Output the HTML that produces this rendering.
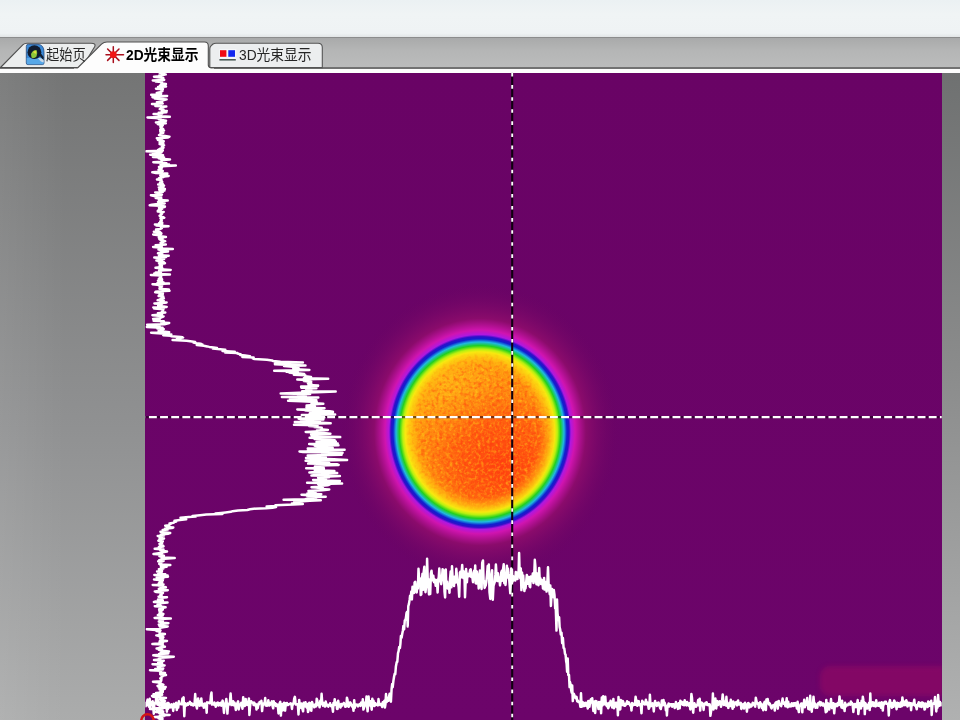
<!DOCTYPE html>
<html lang="zh">
<head>
<meta charset="utf-8">
<title>2D光束显示</title>
<style>
html,body{margin:0;padding:0;}
body{width:960px;height:720px;overflow:hidden;position:relative;background:#8c8c8c;font-family:"Liberation Sans","Noto Sans CJK SC",sans-serif;}
#top{position:absolute;left:0;top:0;width:960px;height:37.2px;background:linear-gradient(#ebf1f3,#f0f4f5 40%,#eff3f4 90%,#e2e5e6);}
#bar{position:absolute;left:0;top:37.2px;width:960px;height:30px;background:linear-gradient(#a9aaaa,#b4b5b5 40%,#bbbcbc);border-top:1.4px solid #8c8d8d;box-sizing:border-box;}
#barline{position:absolute;left:0;top:66.8px;width:960px;height:1.8px;background:#727272;}
#white{position:absolute;left:0;top:68.5px;width:960px;height:4.3px;background:#fdfdfd;}
#leftpane{position:absolute;left:0;top:72.8px;width:146px;height:648px;background:linear-gradient(90deg,rgba(255,255,255,.07),rgba(255,255,255,0) 45%),linear-gradient(#747575,#909192 55%,#abacac);}
#rightpane{position:absolute;left:941px;top:72.8px;width:19px;height:648px;background:linear-gradient(#6f7171,#8a8b8b 45%,#b0b1b1);}
#view{position:absolute;left:145.4px;top:72.8px;width:796.3px;height:648px;background:linear-gradient(#690365,#6c046a);}
svg{position:absolute;left:0;top:0;}
.tab{position:absolute;font-size:15px;line-height:20px;white-space:nowrap;color:#262626;transform:scaleX(.917);transform-origin:0 0;}
</style>
</head>
<body>
<div id="top"></div>
<div id="bar"></div>
<div id="barline"></div>
<div id="white"></div>
<div id="leftpane"></div>
<div id="rightpane"></div>
<div id="view"></div>
<svg width="960" height="720" viewBox="0 0 960 720">
<defs>
<radialGradient id="beam" cx="0.5" cy="0.5" r="0.5">
<stop offset="0" stop-color="#ff8a14"/>
<stop offset="0.36" stop-color="#ff8c12"/>
<stop offset="0.44" stop-color="#ff9a10"/>
<stop offset="0.49" stop-color="#ffc010"/>
<stop offset="0.534" stop-color="#f8ea10"/>
<stop offset="0.553" stop-color="#b8f010"/>
<stop offset="0.576" stop-color="#20d020"/>
<stop offset="0.600" stop-color="#20b8e0"/>
<stop offset="0.621" stop-color="#1020d0"/>
<stop offset="0.636" stop-color="#3010c8"/>
<stop offset="0.650" stop-color="#b018e0"/>
<stop offset="0.679" stop-color="#d014b0"/>
<stop offset="0.757" stop-color="#8e0c6c" stop-opacity="0.9"/>
<stop offset="1" stop-color="#670462" stop-opacity="0"/>
</radialGradient>
<radialGradient id="warm" cx="0.5" cy="0.5" r="0.5">
<stop offset="0" stop-color="#ffc018" stop-opacity="0.75"/>
<stop offset="0.6" stop-color="#ffb014" stop-opacity="0.4"/>
<stop offset="1" stop-color="#ffa010" stop-opacity="0"/>
</radialGradient>
<radialGradient id="hot" cx="0.5" cy="0.5" r="0.5">
<stop offset="0" stop-color="#ff3c10" stop-opacity="0.95"/>
<stop offset="0.5" stop-color="#ff4a10" stop-opacity="0.7"/>
<stop offset="1" stop-color="#ff6a10" stop-opacity="0"/>
</radialGradient>
<clipPath id="vc"><rect x="145.4" y="72.8" width="796.3" height="648"/></clipPath>
<radialGradient id="mg" cx="0.5" cy="0.5" r="0.5">
<stop offset="0" stop-color="#fff"/><stop offset="0.78" stop-color="#fff"/><stop offset="1" stop-color="#000"/>
</radialGradient>
<mask id="core" maskUnits="userSpaceOnUse" x="380" y="320" width="200" height="220"><ellipse cx="480" cy="432" rx="76" ry="81" fill="url(#mg)"/></mask>
<filter id="grainY" x="0" y="0" width="100%" height="100%" color-interpolation-filters="sRGB">
<feTurbulence type="fractalNoise" baseFrequency="0.32" numOctaves="2" seed="4"/>
<feColorMatrix type="matrix" values="0 0 0 0 1  0 0 0 0 0.82  0 0 0 0 0.1  2.6 0 0 0 -1.15"/>
</filter>
<filter id="grainR" x="0" y="0" width="100%" height="100%" color-interpolation-filters="sRGB">
<feTurbulence type="fractalNoise" baseFrequency="0.28" numOctaves="2" seed="9"/>
<feColorMatrix type="matrix" values="0 0 0 0 1  0 0 0 0 0.2  0 0 0 0 0.05  0 2.6 0 0 -1.15"/>
</filter>
<filter id="sm" x="-10%" y="-30%" width="120%" height="160%"><feGaussianBlur stdDeviation="2.5"/></filter>
</defs>
<g clip-path="url(#vc)">
<rect x="820" y="666" width="130" height="30" rx="10" fill="#a80e60" opacity="0.4" filter="url(#sm)"/>
<ellipse cx="480" cy="432" rx="140" ry="150" fill="url(#beam)"/>
<g mask="url(#core)"><ellipse cx="445" cy="380" rx="70" ry="70" fill="url(#warm)"/><ellipse cx="502" cy="464" rx="88" ry="84" fill="url(#hot)"/>
<rect x="390" y="340" width="180" height="190" filter="url(#grainY)" opacity="0.55"/>
<rect x="390" y="340" width="180" height="190" filter="url(#grainR)" opacity="0.5"/></g>
<!-- crosshair -->
<line x1="145.4" y1="417.2" x2="942" y2="417.2" stroke="#100010" stroke-width="2.2" opacity="0.55"/>
<line x1="145.4" y1="417.2" x2="942" y2="417.2" stroke="#fff" stroke-width="2.3" stroke-dasharray="7.9 3.24" stroke-dashoffset="7.61"/>
<line x1="512.2" y1="72.8" x2="512.2" y2="720" stroke="#100010" stroke-width="2.1"/>
<line x1="512.2" y1="73" x2="512.2" y2="720" stroke="#fff" stroke-width="1.9" stroke-dasharray="3.6 8.49"/>
<path d="M158.7 72.5 L161.7 73.1 L161.9 73.7 L165.7 74.4 L163.1 75.0 L159.3 75.6 L159.4 76.3 L154.0 76.7 L159.8 77.4 L163.3 77.9 L163.4 78.4 L162.4 79.0 L160.9 79.5 L164.2 79.9 L152.8 80.4 L162.0 80.9 L155.8 81.6 L162.0 82.1 L160.9 82.7 L161.8 83.5 L165.9 84.0 L161.9 84.6 L160.9 85.1 L160.0 85.6 L160.4 86.1 L166.0 86.6 L158.1 87.1 L163.3 87.6 L160.8 88.1 L156.0 88.7 L162.8 89.3 L161.2 89.8 L162.2 90.5 L162.4 91.0 L160.8 91.7 L159.9 92.3 L156.8 92.9 L161.1 93.6 L160.8 94.3 L151.2 94.8 L152.4 95.4 L167.1 95.9 L162.5 96.4 L152.5 97.2 L159.4 97.9 L154.6 98.4 L160.8 99.0 L166.6 99.4 L163.1 100.2 L162.1 100.9 L162.1 101.6 L156.9 102.2 L158.1 102.9 L162.7 103.6 L152.0 104.1 L159.7 104.8 L160.8 105.4 L155.4 106.1 L166.3 106.6 L161.7 107.0 L161.3 107.7 L162.1 108.3 L159.7 109.1 L163.5 109.6 L162.4 110.4 L166.8 110.9 L161.7 111.6 L166.4 112.3 L158.7 112.8 L162.4 113.4 L153.6 114.1 L161.2 114.7 L158.5 115.3 L159.9 115.8 L161.6 116.3 L169.8 116.8 L147.5 117.5 L155.6 118.1 L160.3 118.6 L158.8 119.3 L161.7 120.0 L166.0 120.7 L163.4 121.4 L161.1 122.0 L155.9 122.5 L165.8 123.3 L157.7 124.0 L160.2 124.7 L162.8 125.3 L162.0 126.0 L161.3 126.4 L160.4 126.9 L161.7 127.6 L161.8 128.3 L163.1 128.9 L160.3 129.4 L160.2 130.0 L164.0 130.6 L160.3 131.2 L162.7 132.0 L163.3 132.7 L160.5 133.2 L160.6 133.8 L160.7 134.4 L159.0 135.1 L160.2 135.5 L165.1 136.1 L169.5 136.7 L168.1 137.4 L156.8 138.2 L162.5 138.7 L161.1 139.2 L157.8 139.8 L159.2 140.5 L163.7 141.2 L161.4 141.8 L159.7 142.5 L160.7 143.1 L163.3 143.6 L159.6 144.1 L162.1 144.8 L164.1 145.3 L162.6 145.8 L162.0 146.5 L161.8 147.2 L163.5 147.7 L161.8 148.2 L159.4 148.9 L162.7 149.6 L158.0 150.1 L162.8 150.7 L146.1 151.2 L161.6 151.9 L161.4 152.5 L158.8 153.1 L152.8 153.7 L158.0 154.2 L150.1 154.7 L163.1 155.2 L157.7 155.9 L159.5 156.4 L152.9 157.0 L164.1 157.5 L158.6 158.2 L160.9 158.8 L170.0 159.4 L162.4 160.1 L161.5 160.6 L161.3 161.2 L161.7 161.8 L153.3 162.3 L162.5 162.8 L166.4 163.3 L162.7 163.8 L169.0 164.4 L160.5 164.9 L175.8 165.6 L162.2 166.3 L159.0 166.9 L162.0 167.5 L159.5 168.1 L161.2 168.7 L161.4 169.2 L158.5 169.8 L160.2 170.2 L162.8 170.9 L161.5 171.6 L152.3 172.3 L155.8 172.9 L167.3 173.6 L165.7 174.1 L161.7 174.6 L160.3 175.3 L168.7 176.0 L164.0 176.5 L163.6 177.1 L160.0 177.7 L158.8 178.3 L161.0 178.8 L157.0 179.5 L161.5 180.1 L161.1 180.6 L161.7 181.3 L162.2 181.9 L160.0 182.5 L161.0 183.1 L162.7 183.8 L158.2 184.5 L163.1 185.0 L164.0 185.6 L162.1 186.2 L163.5 186.8 L158.8 187.4 L162.0 188.0 L159.5 188.5 L164.9 189.1 L159.2 189.8 L164.5 190.5 L160.1 191.2 L162.8 191.9 L155.2 192.5 L159.9 193.0 L160.2 193.6 L160.9 194.1 L161.9 194.7 L150.9 195.3 L154.3 196.0 L159.9 196.6 L161.2 197.2 L155.6 197.9 L160.8 198.4 L161.4 198.9 L160.5 199.5 L158.9 200.0 L167.7 200.6 L159.4 201.2 L158.0 202.0 L162.9 202.7 L164.7 203.4 L157.9 204.0 L152.0 204.7 L149.7 205.2 L160.4 205.8 L164.9 206.5 L164.7 207.0 L159.0 207.4 L160.5 208.1 L162.2 208.8 L159.0 209.4 L160.9 209.9 L157.8 210.7 L157.8 211.4 L163.7 211.9 L160.2 212.4 L161.2 213.0 L162.0 213.7 L161.2 214.4 L160.4 215.1 L159.6 215.8 L161.4 216.6 L163.5 217.2 L164.3 217.7 L160.4 218.4 L160.9 218.9 L161.6 219.6 L161.8 220.2 L160.7 220.9 L160.3 221.6 L161.5 222.0 L162.2 222.7 L159.1 223.2 L162.2 223.9 L154.9 224.5 L156.5 224.9 L156.2 225.5 L168.6 226.2 L160.7 226.7 L161.9 227.5 L161.9 228.1 L160.4 228.9 L156.0 229.6 L158.6 230.3 L158.2 231.0 L153.9 231.7 L160.2 232.2 L160.1 232.6 L161.4 233.3 L161.3 233.9 L153.2 234.4 L157.1 235.1 L160.7 235.7 L161.2 236.3 L165.9 237.0 L158.8 237.6 L161.5 238.2 L162.6 238.7 L159.4 239.2 L160.6 239.8 L162.4 240.4 L165.2 241.1 L163.7 241.7 L161.5 242.2 L160.6 242.8 L161.7 243.3 L160.8 243.9 L165.8 244.5 L155.6 245.2 L160.0 245.9 L161.6 246.5 L153.1 247.0 L162.0 247.7 L161.0 248.4 L172.8 249.1 L158.5 249.6 L162.1 250.2 L163.0 250.8 L168.0 251.5 L161.7 252.0 L159.8 252.7 L158.0 253.3 L162.2 254.0 L159.5 254.6 L159.0 255.2 L168.7 255.8 L161.0 256.4 L166.2 256.9 L154.3 257.6 L160.6 258.2 L164.1 258.9 L161.0 259.5 L162.4 260.1 L156.4 260.6 L161.1 261.2 L161.0 261.7 L163.8 262.2 L158.9 262.8 L165.0 263.2 L161.8 263.8 L159.7 264.6 L161.2 265.3 L161.9 265.8 L159.5 266.3 L161.8 267.1 L155.5 267.8 L162.5 268.5 L160.6 269.2 L170.7 269.9 L159.1 270.6 L159.4 271.2 L161.0 271.9 L155.8 272.4 L160.5 272.9 L154.3 273.4 L159.2 273.9 L169.9 274.4 L150.9 274.9 L161.5 275.6 L161.0 276.3 L159.8 277.0 L161.0 277.7 L161.5 278.3 L158.8 279.0 L162.1 279.6 L160.6 280.1 L158.0 280.7 L162.2 281.4 L161.4 282.0 L163.5 282.4 L157.5 283.1 L169.0 283.6 L152.5 284.2 L157.3 284.8 L161.1 285.5 L162.1 285.9 L159.5 286.6 L160.8 287.1 L161.0 287.6 L162.1 288.3 L159.5 288.7 L168.8 289.5 L163.1 290.1 L169.5 290.8 L159.7 291.3 L155.5 291.8 L155.2 292.3 L159.4 292.8 L162.9 293.5 L161.5 293.9 L162.7 294.6 L159.1 295.2 L158.6 295.9 L163.3 296.5 L161.7 297.1 L162.1 297.7 L163.9 298.2 L160.9 298.8 L160.4 299.2 L159.3 299.7 L157.6 300.2 L163.7 300.7 L162.7 301.2 L160.3 301.9 L166.6 302.4 L162.7 303.0 L154.4 303.5 L161.9 304.0 L158.1 304.6 L161.4 305.2 L158.2 305.8 L163.7 306.4 L166.7 306.9 L153.3 307.4 L164.2 308.0 L154.2 308.6 L163.4 309.2 L163.3 309.9 L162.6 310.6 L162.5 311.3 L161.8 311.9 L165.3 312.6 L157.9 313.3 L160.6 314.0 L162.0 314.5 L152.4 315.2 L158.4 315.8 L163.6 316.4 L162.6 316.9 L161.4 317.4 L159.8 318.2 L153.1 318.9 L159.6 319.5 L159.7 320.0 L153.6 320.8 L163.8 321.3 L163.6 321.9 L161.3 322.4 L169.2 323.0 L166.3 323.7 L164.4 324.2 L147.1 324.7 L159.4 325.2 L159.5 325.8 L159.6 326.5 L146.7 327.0 L162.6 327.8 L157.4 328.5 L163.7 329.1 L161.9 329.7 L161.1 330.3 L158.6 330.9 L163.3 331.6 L169.2 332.2 L151.1 332.7 L161.6 333.4 L166.3 333.9 L171.3 334.6 L163.2 335.2 L170.7 335.7 L171.1 336.2 L180.9 336.9 L183.1 337.6 L177.0 338.3 L177.8 338.9 L180.3 339.5 L172.6 340.1 L186.6 340.8 L192.0 341.4 L195.1 342.0 L193.4 342.6 L196.6 343.2 L200.8 343.7 L199.3 344.1 L202.4 344.6 L196.8 345.1 L203.7 345.7 L207.2 346.4 L209.3 346.9 L213.6 347.5 L217.0 348.0 L212.8 348.6 L217.7 349.1 L225.3 349.8 L225.1 350.4 L222.5 351.0 L234.8 351.7 L225.0 352.4 L237.5 353.1 L237.4 353.6 L240.7 354.3 L240.1 354.9 L245.2 355.6 L250.0 356.2 L242.3 356.9 L253.6 357.5 L253.0 357.9 L252.7 358.4 L254.4 359.0 L266.9 359.7 L272.0 360.4 L273.3 361.1 L280.6 361.7 L302.9 362.4 L274.9 363.1 L276.1 363.6 L275.0 364.3 L285.7 364.8 L305.5 365.5 L284.1 366.1 L292.7 366.8 L296.2 367.5 L298.7 368.2 L293.3 368.6 L296.3 369.2 L309.4 370.0 L274.2 370.7 L297.6 371.2 L286.3 371.8 L297.8 372.3 L289.5 372.8 L297.9 373.3 L304.2 374.0 L293.8 374.7 L305.3 375.3 L305.0 376.0 L307.1 376.4 L311.0 377.1 L309.4 377.6 L303.9 378.3 L328.2 378.8 L297.3 379.5 L306.2 380.1 L310.2 380.6 L303.9 381.1 L311.2 381.7 L310.2 382.2 L307.8 382.9 L311.3 383.4 L308.5 384.0 L308.5 384.5 L308.6 385.1 L318.1 385.6 L318.0 386.1 L301.1 386.6 L307.4 387.1 L301.3 387.7 L316.4 388.2 L305.9 388.6 L306.3 389.3 L306.7 389.8 L311.4 390.5 L302.2 391.2 L335.7 391.6 L316.8 392.3 L299.2 392.8 L280.7 393.4 L310.1 394.1 L300.9 394.8 L298.1 395.3 L305.7 395.9 L304.1 396.4 L281.9 396.9 L318.3 397.5 L297.7 398.3 L290.0 399.0 L304.2 399.5 L316.4 400.2 L288.1 400.8 L301.5 401.2 L316.7 401.9 L313.6 402.5 L311.4 403.0 L323.3 403.8 L315.3 404.3 L314.6 405.0 L306.6 405.4 L309.7 406.2 L314.9 406.7 L306.4 407.2 L308.9 407.7 L324.5 408.3 L313.9 408.9 L297.3 409.5 L307.9 410.1 L305.3 410.6 L329.8 411.2 L332.9 411.7 L333.0 412.2 L310.1 412.9 L309.8 413.3 L324.4 413.9 L335.1 414.6 L301.8 415.1 L323.9 415.7 L315.3 416.2 L307.0 416.9 L324.3 417.5 L311.2 418.1 L298.6 418.8 L323.4 419.4 L300.8 419.9 L320.1 420.7 L309.4 421.4 L294.8 422.0 L322.1 422.8 L330.7 423.2 L311.0 423.7 L306.2 424.2 L294.0 424.7 L317.6 425.3 L308.9 425.9 L317.5 426.4 L314.6 427.1 L321.7 427.7 L321.4 428.5 L320.9 429.2 L327.9 429.9 L316.9 430.6 L319.7 431.2 L305.7 431.9 L320.2 432.6 L325.9 433.3 L330.4 433.8 L311.1 434.4 L314.5 435.0 L311.6 435.6 L315.5 436.1 L319.8 436.6 L340.2 437.1 L309.6 437.8 L326.2 438.6 L314.6 439.1 L321.6 439.6 L334.7 440.3 L324.2 440.9 L335.8 441.4 L316.5 441.9 L324.7 442.4 L331.8 442.9 L337.7 443.5 L309.2 444.1 L316.8 444.8 L338.5 445.3 L314.7 445.8 L319.8 446.3 L320.4 446.9 L328.7 447.5 L332.7 448.0 L307.8 448.6 L310.7 449.2 L344.6 449.7 L307.9 450.3 L323.2 450.9 L299.5 451.4 L303.1 452.1 L342.6 452.7 L322.0 453.2 L335.6 453.7 L338.7 454.2 L341.6 454.7 L307.7 455.4 L320.1 456.0 L318.3 456.6 L325.8 457.4 L306.0 458.0 L314.7 458.6 L333.9 459.3 L347.1 460.0 L305.6 460.8 L319.7 461.5 L327.0 462.0 L319.7 462.5 L329.2 463.1 L308.2 463.6 L336.9 464.2 L338.7 464.9 L319.3 465.4 L322.8 465.9 L314.9 466.5 L315.5 467.2 L323.7 467.7 L306.2 468.2 L323.9 468.7 L314.9 469.2 L320.8 469.7 L314.8 470.3 L334.4 471.0 L322.3 471.4 L315.0 472.0 L309.4 472.6 L337.2 473.1 L323.3 473.8 L313.6 474.4 L321.1 475.0 L311.4 475.5 L339.9 476.0 L329.5 476.6 L329.0 477.3 L318.1 477.8 L323.2 478.5 L326.0 479.2 L313.1 480.0 L323.9 480.5 L339.9 481.0 L329.0 481.6 L325.3 482.2 L307.1 482.7 L342.1 483.5 L318.1 484.0 L329.5 484.6 L327.6 485.2 L318.7 486.0 L321.4 486.6 L311.5 487.2 L315.5 487.6 L323.1 488.3 L320.7 489.1 L329.3 489.5 L322.4 490.3 L308.4 491.0 L315.9 491.6 L310.2 492.1 L315.1 492.8 L307.4 493.5 L321.3 494.2 L301.5 494.8 L311.9 495.5 L307.2 496.2 L325.7 496.8 L312.6 497.2 L316.3 497.9 L309.6 498.6 L304.8 499.3 L283.6 499.8 L320.8 500.3 L309.8 500.8 L299.7 501.5 L294.2 502.2 L298.2 502.9 L291.9 503.5 L302.8 504.1 L293.4 504.6 L275.4 505.3 L276.1 506.0 L266.6 506.5 L276.1 507.0 L272.4 507.7 L266.1 508.2 L253.8 508.7 L250.0 509.3 L247.3 510.0 L238.1 510.6 L232.5 511.2 L230.9 511.8 L225.6 512.4 L221.1 512.9 L215.5 513.5 L222.5 514.0 L206.3 514.5 L200.1 515.2 L192.5 515.9 L195.8 516.5 L188.7 517.1 L180.5 517.7 L183.8 518.3 L181.1 518.9 L186.2 519.3 L179.9 520.0 L174.5 520.8 L176.2 521.5 L174.0 522.1 L173.6 522.8 L169.5 523.4 L170.9 523.8 L169.8 524.5 L168.8 525.2 L165.2 525.7 L167.7 526.2 L166.6 526.9 L173.3 527.5 L171.8 528.0 L164.9 528.7 L167.8 529.4 L162.7 529.9 L163.2 530.5 L163.1 531.2 L160.5 531.7 L165.8 532.4 L170.2 533.0 L168.4 533.7 L162.5 534.2 L160.7 534.8 L164.1 535.4 L157.7 536.0 L162.1 536.5 L161.8 537.3 L159.5 537.9 L164.0 538.6 L160.4 539.2 L161.6 539.7 L158.9 540.3 L158.4 540.7 L162.8 541.3 L162.4 541.9 L161.1 542.4 L162.1 543.1 L159.5 543.7 L159.8 544.4 L160.3 545.0 L163.2 545.8 L163.5 546.4 L158.9 547.0 L160.0 547.5 L160.2 548.2 L154.7 548.8 L163.5 549.4 L160.9 549.9 L160.1 550.4 L163.8 551.1 L167.0 551.6 L162.8 552.2 L162.3 552.9 L158.7 553.3 L153.5 554.0 L161.2 554.4 L161.7 555.1 L163.9 555.7 L159.4 556.2 L161.3 556.9 L162.3 557.5 L174.7 558.1 L161.5 558.9 L162.1 559.5 L159.1 560.2 L163.7 560.9 L158.2 561.3 L161.1 562.0 L161.4 562.7 L160.8 563.3 L159.2 563.9 L160.6 564.5 L170.3 565.1 L160.8 565.8 L161.0 566.2 L166.6 566.8 L160.9 567.4 L161.9 568.0 L163.4 568.6 L158.9 569.2 L159.4 569.8 L162.0 570.4 L162.0 571.0 L157.1 571.5 L161.8 571.9 L158.5 572.4 L159.8 573.1 L158.3 573.7 L165.3 574.3 L154.3 575.0 L167.6 575.6 L156.9 576.3 L168.0 576.8 L156.7 577.4 L161.1 578.1 L163.2 578.8 L154.0 579.5 L159.8 580.0 L162.8 580.5 L159.5 581.0 L161.2 581.7 L162.1 582.4 L158.9 583.1 L158.7 583.7 L163.5 584.4 L152.7 584.9 L163.0 585.4 L159.1 586.1 L163.5 586.7 L165.9 587.2 L160.1 587.8 L164.6 588.5 L158.8 589.1 L163.0 589.6 L167.8 590.2 L160.9 590.7 L154.8 591.4 L156.3 592.0 L161.3 592.5 L163.0 593.0 L160.6 593.8 L161.6 594.4 L160.4 594.9 L160.2 595.4 L161.8 596.1 L158.6 596.7 L167.0 597.2 L162.0 597.8 L162.6 598.3 L161.1 598.7 L158.0 599.5 L162.6 600.0 L162.8 600.7 L155.7 601.4 L153.9 601.9 L167.5 602.6 L160.1 603.2 L160.7 603.8 L157.5 604.5 L159.2 605.0 L160.7 605.6 L154.8 606.2 L162.2 606.8 L165.6 607.3 L162.2 608.1 L161.2 608.7 L159.1 609.2 L162.8 609.7 L159.7 610.3 L159.3 610.8 L161.4 611.5 L159.9 612.1 L159.7 612.6 L160.5 613.3 L163.4 614.0 L159.6 614.4 L157.8 615.1 L162.7 615.6 L159.9 616.2 L159.6 616.7 L160.9 617.2 L154.6 617.9 L170.8 618.4 L159.1 619.0 L163.1 619.6 L162.9 620.3 L162.9 620.9 L158.8 621.5 L160.7 622.1 L161.1 622.6 L168.4 623.2 L161.0 624.0 L158.8 624.5 L161.6 625.1 L159.3 625.7 L167.7 626.4 L163.0 627.2 L160.4 627.7 L160.0 628.1 L159.7 628.9 L146.7 629.3 L155.9 630.0 L160.5 630.6 L156.5 631.1 L159.8 631.6 L159.3 632.3 L159.3 632.7 L159.7 633.5 L164.9 634.1 L162.9 634.7 L156.3 635.4 L159.1 636.0 L161.0 636.7 L163.4 637.2 L160.0 637.9 L162.7 638.6 L162.0 639.1 L161.7 639.7 L160.2 640.2 L167.0 640.9 L159.6 641.5 L162.4 642.1 L162.9 642.7 L158.2 643.4 L152.4 644.0 L162.7 644.6 L162.7 645.1 L163.1 645.5 L161.6 646.2 L164.9 646.8 L159.6 647.4 L161.7 647.8 L156.6 648.5 L162.1 649.2 L158.8 649.7 L161.4 650.3 L162.8 650.8 L169.0 651.5 L168.1 652.0 L160.7 652.5 L160.8 653.0 L168.3 653.5 L159.1 654.0 L160.6 654.7 L153.3 655.3 L157.6 656.0 L173.8 656.7 L169.0 657.3 L160.2 657.8 L160.8 658.2 L158.6 658.9 L159.5 659.5 L154.0 660.1 L163.8 660.7 L162.3 661.3 L160.7 662.0 L158.2 662.6 L162.1 663.2 L159.7 663.9 L152.5 664.3 L160.2 664.8 L164.6 665.4 L161.6 665.8 L157.7 666.6 L160.6 667.3 L160.0 667.9 L163.2 668.5 L155.2 669.1 L162.7 669.6 L150.0 670.2 L161.1 670.8 L159.8 671.5 L160.2 672.1 L161.2 672.5 L165.0 673.0 L163.9 673.5 L160.2 674.0 L160.8 674.6 L166.0 675.1 L162.0 675.8 L162.5 676.4 L161.5 677.0 L161.3 677.6 L160.3 678.3 L161.6 678.8 L161.2 679.4 L160.9 680.1 L161.3 680.6 L160.9 681.2 L153.0 681.7 L156.9 682.3 L160.5 682.8 L159.3 683.4 L161.1 684.0 L163.4 684.7 L159.1 685.3 L157.5 685.9 L160.4 686.4 L165.7 687.0 L158.6 687.5 L160.5 688.2 L165.0 688.7 L159.5 689.4 L161.7 690.0 L162.9 690.6 L160.5 691.4 L162.8 692.0 L162.0 692.5 L156.1 693.1 L161.8 693.7 L153.5 694.3 L162.2 694.8 L160.2 695.4 L152.0 696.0 L153.1 696.8 L160.0 697.5 L166.0 698.0 L160.0 698.5 L159.5 699.2 L160.9 699.9 L164.1 700.5 L165.0 701.0 L164.3 701.8 L159.4 702.5 L160.6 702.9 L165.2 703.4 L159.6 704.0 L157.6 704.6 L164.2 705.0 L160.7 705.7 L162.2 706.4 L175.5 707.1 L164.2 707.8 L153.6 708.4 L150.0 709.1 L162.4 709.6 L159.2 710.0 L157.2 710.7 L163.2 711.4 L155.7 711.9 L162.7 712.5 L159.0 712.9 L163.5 713.6 L160.8 714.3 L169.6 714.9 L159.9 715.3 L164.6 715.9 L162.5 716.5 L154.1 717.0 L160.9 717.6 L158.5 718.2 L162.5 718.9 L159.8 719.5 L162.5 720.3 L162.0 721.0 L161.0 721.5" fill="none" stroke="#fff" stroke-width="2.5" stroke-linejoin="round"/>
<path d="M145.0 707.1 L145.6 706.3 L146.1 702.7 L146.7 705.2 L147.1 701.6 L147.6 699.6 L148.2 703.4 L149.0 706.8 L149.7 698.8 L150.3 707.7 L150.8 704.1 L151.3 702.3 L152.0 704.2 L152.6 701.2 L153.2 706.4 L153.8 713.8 L154.4 703.0 L155.0 703.7 L155.7 702.8 L156.2 697.6 L156.9 693.7 L157.5 704.2 L158.2 700.3 L158.9 705.2 L159.5 705.6 L160.1 703.5 L160.6 703.0 L161.1 703.1 L161.8 704.9 L162.4 703.4 L162.9 704.9 L163.6 706.4 L164.1 704.5 L164.8 704.4 L165.3 705.7 L165.8 704.1 L166.3 705.0 L166.9 711.7 L167.4 702.9 L168.0 709.0 L168.5 703.1 L169.0 704.7 L169.6 705.3 L170.3 704.8 L170.9 705.5 L171.6 704.4 L172.0 705.0 L172.7 705.0 L173.2 710.9 L173.9 703.8 L174.3 704.2 L174.8 705.4 L175.5 705.2 L176.2 702.7 L176.8 710.1 L177.6 706.0 L178.2 707.5 L178.9 701.2 L179.4 704.0 L180.2 704.1 L180.6 703.9 L181.1 704.2 L181.8 704.3 L182.4 698.4 L183.0 698.7 L183.6 697.3 L184.3 716.2 L184.9 702.9 L185.5 704.2 L186.0 704.4 L186.5 705.4 L187.0 704.9 L187.6 703.3 L188.1 704.7 L188.7 703.5 L189.2 703.2 L189.9 701.8 L190.5 704.0 L191.1 704.9 L191.6 703.4 L192.1 704.6 L192.8 704.1 L193.3 705.5 L194.0 705.0 L194.5 704.6 L195.2 694.0 L195.8 703.8 L196.3 706.0 L197.0 708.5 L197.5 703.3 L198.1 698.5 L198.7 702.5 L199.2 701.2 L199.7 705.8 L200.3 703.5 L200.8 704.8 L201.3 698.4 L202.0 705.6 L202.7 703.6 L203.3 704.7 L203.8 707.7 L204.3 706.8 L204.9 703.5 L205.6 707.2 L206.1 705.7 L206.7 712.8 L207.1 702.2 L207.8 703.0 L208.5 702.6 L209.1 703.0 L209.6 703.3 L210.4 702.1 L210.9 695.8 L211.5 692.5 L212.0 704.6 L212.7 704.4 L213.4 703.5 L214.0 704.8 L214.4 702.6 L215.1 704.0 L215.7 706.7 L216.3 703.9 L216.7 703.3 L217.2 702.9 L217.8 702.5 L218.5 705.6 L219.2 704.9 L219.8 703.3 L220.3 704.1 L220.8 702.7 L221.3 705.8 L222.0 703.2 L222.6 700.6 L223.1 703.0 L223.5 707.5 L224.0 712.9 L224.6 706.0 L225.1 704.1 L225.8 702.5 L226.3 698.9 L226.9 704.2 L227.4 713.6 L228.0 705.6 L228.6 705.2 L229.1 703.7 L229.9 702.4 L230.6 693.5 L231.4 705.1 L231.9 704.9 L232.5 704.6 L233.1 701.2 L233.6 705.3 L234.1 704.5 L234.6 702.7 L235.3 705.5 L235.8 709.9 L236.5 706.3 L237.1 703.9 L237.6 702.4 L238.1 701.3 L238.7 709.4 L239.4 706.3 L240.0 704.7 L240.6 704.3 L241.2 702.9 L241.8 704.3 L242.5 708.7 L243.2 697.2 L243.8 705.9 L244.5 706.1 L245.1 705.5 L245.7 698.9 L246.1 703.5 L246.7 704.0 L247.2 705.0 L247.8 702.6 L248.4 701.4 L248.9 698.4 L249.4 714.9 L250.0 706.9 L250.5 703.3 L251.1 701.2 L251.6 702.6 L252.3 702.4 L253.1 702.7 L253.6 705.1 L254.2 702.6 L254.7 703.8 L255.2 705.4 L256.0 704.2 L256.5 709.6 L257.2 704.9 L257.8 708.0 L258.5 703.4 L259.0 704.3 L259.6 702.0 L260.4 702.5 L261.0 703.0 L261.4 700.8 L262.1 711.1 L262.6 706.3 L263.2 703.8 L263.9 703.3 L264.5 704.1 L265.2 698.1 L265.7 705.5 L266.4 705.5 L267.1 705.8 L267.8 704.2 L268.3 700.3 L268.9 703.4 L269.4 705.6 L269.9 704.9 L270.5 703.0 L271.2 703.6 L271.9 701.4 L272.5 706.0 L273.2 708.3 L273.7 701.2 L274.2 704.8 L274.8 703.2 L275.3 703.3 L275.9 706.0 L276.5 704.1 L277.2 705.8 L277.8 705.2 L278.5 713.4 L279.1 704.8 L279.6 703.3 L280.3 701.9 L280.9 715.6 L281.5 704.0 L282.0 707.6 L282.7 710.4 L283.4 704.1 L284.0 702.7 L284.5 710.0 L285.1 710.6 L285.8 703.3 L286.3 705.5 L286.9 702.9 L287.5 704.8 L288.0 705.0 L288.7 704.5 L289.4 704.0 L290.0 703.9 L290.7 703.3 L291.4 704.6 L292.0 708.9 L292.5 703.8 L293.1 704.5 L293.7 702.8 L294.2 698.7 L294.9 696.8 L295.5 702.5 L296.0 704.6 L296.7 704.0 L297.4 704.5 L297.9 705.5 L298.5 714.5 L299.2 699.9 L299.9 707.9 L300.5 706.7 L301.2 703.4 L301.8 707.0 L302.4 708.8 L303.1 711.3 L303.7 702.8 L304.3 706.4 L304.8 706.3 L305.5 702.2 L306.1 706.5 L306.8 707.7 L307.4 704.1 L308.0 712.1 L308.6 710.3 L309.3 702.7 L310.0 704.9 L310.7 704.0 L311.3 710.8 L312.0 702.0 L312.5 703.5 L313.1 704.8 L313.8 705.8 L314.3 707.3 L315.0 705.5 L315.5 704.1 L316.2 706.4 L316.7 698.8 L317.2 700.0 L317.7 702.9 L318.4 704.7 L319.0 704.4 L319.6 707.3 L320.3 700.8 L321.0 703.8 L321.6 693.8 L322.3 703.9 L322.9 705.6 L323.6 702.9 L324.2 703.5 L324.8 706.5 L325.3 706.6 L325.7 701.5 L326.5 705.3 L327.1 704.5 L327.7 705.7 L328.3 706.6 L328.7 705.6 L329.4 705.0 L330.1 703.2 L330.7 705.6 L331.2 706.2 L331.7 705.3 L332.2 706.3 L333.0 711.7 L333.4 703.1 L334.1 705.2 L334.7 699.2 L335.3 704.7 L335.9 704.8 L336.5 702.8 L337.0 709.0 L337.6 708.8 L338.2 700.7 L338.9 704.9 L339.3 705.3 L339.8 706.6 L340.5 707.5 L341.1 704.0 L341.6 706.1 L342.1 703.9 L342.7 703.9 L343.3 703.7 L343.9 702.9 L344.6 705.3 L345.2 706.8 L345.9 704.6 L346.4 706.4 L346.9 697.7 L347.5 699.9 L348.1 706.1 L348.7 706.8 L349.4 703.0 L350.1 702.4 L350.7 703.1 L351.3 705.2 L351.9 706.4 L352.4 705.1 L353.0 706.8 L353.5 710.8 L354.2 700.2 L354.8 707.9 L355.4 704.3 L356.1 705.2 L356.7 704.5 L357.4 704.8 L358.1 706.4 L358.8 705.2 L359.3 704.2 L360.0 704.1 L360.7 705.9 L361.2 702.5 L361.8 702.5 L362.3 705.1 L362.8 699.3 L363.4 709.6 L364.0 707.8 L364.5 706.5 L365.1 702.4 L365.8 705.2 L366.5 696.5 L367.0 704.6 L367.6 711.3 L368.1 705.7 L368.6 696.5 L369.1 705.5 L369.7 702.4 L370.2 704.5 L370.7 701.2 L371.2 705.8 L371.7 709.7 L372.3 698.7 L372.8 705.6 L373.5 700.7 L374.2 706.1 L374.8 705.5 L375.4 703.1 L376.1 704.9 L376.7 704.6 L377.3 704.6 L378.0 705.4 L378.5 699.1 L379.0 702.9 L379.5 704.0 L380.2 704.9 L380.9 704.0 L381.5 703.9 L382.2 707.1 L382.8 702.2 L383.4 704.2 L383.9 701.9 L384.4 700.8 L384.9 707.6 L385.4 704.6 L386.0 694.0 L386.7 702.0 L387.4 698.0 L387.9 698.6 L388.5 700.7 L389.0 697.0 L389.6 693.8 L390.2 695.6 L390.9 701.7 L391.6 689.0 L392.2 683.9 L392.7 687.2 L393.4 680.9 L394.1 676.5 L394.7 673.8 L395.3 674.0 L395.9 666.4 L396.7 662.3 L397.3 661.8 L398.0 653.2 L398.6 651.2 L399.2 646.9 L399.9 648.0 L400.4 643.8 L400.9 636.0 L401.6 637.7 L402.2 634.1 L402.9 630.5 L403.4 626.0 L404.1 629.3 L404.8 620.4 L405.5 620.0 L406.0 617.1 L406.5 613.1 L407.1 611.8 L407.7 626.4 L408.3 606.2 L408.9 604.1 L409.6 599.9 L410.1 595.7 L410.6 598.5 L411.3 591.5 L411.9 599.4 L412.5 586.8 L412.9 589.2 L413.6 590.0 L414.2 592.9 L414.6 582.4 L415.3 581.8 L416.0 587.7 L416.7 592.4 L417.3 585.9 L417.9 588.5 L418.5 568.8 L419.0 577.6 L419.7 580.7 L420.2 578.4 L420.7 594.9 L421.3 594.5 L421.9 581.5 L422.5 573.7 L423.1 589.7 L423.6 572.8 L424.3 566.8 L424.8 583.0 L425.5 592.2 L426.2 585.1 L426.7 582.3 L427.1 558.7 L427.9 584.8 L428.3 585.2 L429.0 594.5 L429.5 579.4 L430.2 594.0 L430.9 573.5 L431.5 570.7 L432.0 576.4 L432.7 580.3 L433.3 575.7 L434.0 582.2 L434.6 581.2 L435.0 579.6 L435.7 585.8 L436.3 583.8 L436.9 580.0 L437.6 592.5 L438.2 580.6 L438.8 576.6 L439.3 568.5 L440.0 581.2 L440.7 577.7 L441.2 584.2 L441.9 578.8 L442.6 569.2 L443.2 577.0 L443.9 570.4 L444.5 591.5 L445.1 597.4 L445.8 569.5 L446.2 583.1 L446.7 584.6 L447.2 581.8 L447.8 588.6 L448.4 586.5 L448.9 584.5 L449.5 592.8 L450.0 579.1 L450.7 571.4 L451.4 587.3 L452.0 566.3 L452.7 579.6 L453.3 582.8 L454.0 586.1 L454.5 576.7 L455.1 582.7 L455.8 581.7 L456.3 568.8 L456.8 574.6 L457.5 582.9 L458.0 582.9 L458.6 586.8 L459.2 596.8 L459.9 572.6 L460.6 571.5 L461.1 577.4 L461.7 570.8 L462.2 565.1 L462.8 576.2 L463.4 578.0 L463.8 571.5 L464.5 576.4 L465.0 597.3 L465.6 582.9 L466.1 569.0 L466.9 582.3 L467.5 573.8 L468.2 575.4 L468.9 576.2 L469.5 573.8 L470.1 570.0 L470.7 569.3 L471.3 577.1 L471.9 576.1 L472.4 577.0 L473.0 582.2 L473.6 572.5 L474.2 570.6 L474.7 578.3 L475.2 565.6 L475.7 583.2 L476.2 583.5 L476.8 571.4 L477.5 576.3 L478.2 580.6 L478.7 588.4 L479.1 580.5 L479.9 570.5 L480.4 571.7 L480.9 585.5 L481.6 589.0 L482.2 562.9 L483.0 560.5 L483.6 581.2 L484.1 581.1 L484.6 587.9 L485.2 586.3 L485.7 585.6 L486.3 582.1 L487.0 575.1 L487.7 566.0 L488.2 569.5 L488.8 564.4 L489.5 592.1 L490.3 598.9 L490.8 597.4 L491.4 575.0 L492.1 570.2 L492.8 599.7 L493.5 586.0 L494.1 583.8 L494.8 581.9 L495.4 574.4 L495.9 564.5 L496.5 573.8 L497.3 581.1 L497.9 573.3 L498.3 576.9 L499.0 581.0 L499.4 578.0 L500.0 585.4 L500.5 581.8 L501.2 572.6 L501.8 570.8 L502.3 580.7 L503.0 569.8 L503.7 564.3 L504.3 583.1 L504.9 574.3 L505.5 584.9 L506.2 576.0 L506.9 565.7 L507.4 577.6 L507.9 568.5 L508.4 573.9 L509.1 577.6 L509.6 584.3 L510.3 593.3 L510.7 584.9 L511.2 568.4 L511.9 571.1 L512.6 581.5 L513.3 576.3 L513.9 578.1 L514.6 578.3 L515.3 580.5 L515.8 572.0 L516.3 576.0 L516.7 577.2 L517.5 579.0 L517.9 572.9 L518.6 571.4 L519.1 553.0 L519.7 575.0 L520.3 578.4 L520.8 568.6 L521.4 590.1 L522.0 572.4 L522.6 580.6 L523.2 575.4 L523.9 587.1 L524.4 591.0 L524.9 587.4 L525.5 588.4 L526.2 581.8 L526.8 575.0 L527.4 580.7 L528.0 583.8 L528.5 577.0 L529.1 577.2 L529.6 586.2 L530.2 587.1 L530.8 576.4 L531.5 581.1 L532.1 580.4 L532.8 573.6 L533.5 583.1 L534.2 575.7 L534.8 559.8 L535.4 566.7 L535.8 579.8 L536.5 584.3 L537.2 573.6 L537.8 581.5 L538.5 585.3 L539.2 568.1 L539.8 581.9 L540.4 578.3 L540.9 584.0 L541.6 580.0 L542.4 581.3 L543.0 588.6 L543.6 581.6 L544.1 577.9 L544.6 589.6 L545.4 585.0 L546.0 582.0 L546.6 591.6 L547.3 583.4 L548.0 567.2 L548.8 589.0 L549.2 590.2 L549.8 594.3 L550.3 585.6 L550.9 605.9 L551.6 592.1 L552.0 589.0 L552.7 597.0 L553.2 597.2 L553.8 589.9 L554.5 595.1 L555.2 608.4 L555.8 608.8 L556.5 630.6 L557.0 599.5 L557.5 613.1 L558.0 617.7 L558.5 619.9 L559.1 617.1 L559.6 627.0 L560.2 629.5 L560.8 634.6 L561.5 632.6 L562.2 643.1 L562.9 638.1 L563.6 647.9 L564.3 648.4 L565.0 653.9 L565.6 654.8 L566.2 661.6 L566.6 663.4 L567.1 671.7 L567.7 658.5 L568.3 675.0 L569.0 674.9 L569.6 687.1 L570.0 681.9 L570.6 684.6 L571.2 690.4 L571.7 692.6 L572.2 685.5 L572.8 701.1 L573.3 693.8 L573.8 693.8 L574.5 695.4 L575.1 697.4 L575.8 698.3 L576.5 696.8 L577.2 701.3 L577.9 700.6 L578.3 702.0 L579.1 701.8 L579.8 702.9 L580.4 706.7 L581.0 693.2 L581.6 706.7 L582.4 702.0 L582.9 706.3 L583.5 702.7 L584.1 703.0 L584.5 705.9 L585.2 704.8 L585.9 702.7 L586.6 706.0 L587.2 704.4 L587.8 708.5 L588.3 700.9 L588.8 706.0 L589.5 706.6 L590.3 700.9 L590.9 699.3 L591.5 702.4 L592.2 698.2 L592.7 703.4 L593.4 711.1 L594.0 706.1 L594.6 701.6 L595.2 713.0 L595.8 701.0 L596.5 701.4 L597.1 704.3 L597.8 704.5 L598.5 709.1 L599.0 702.0 L599.6 702.3 L600.1 702.0 L600.6 704.4 L601.1 713.3 L601.8 697.5 L602.5 705.5 L603.2 696.3 L604.0 704.3 L604.7 700.5 L605.3 696.8 L605.8 704.4 L606.4 705.2 L606.9 706.3 L607.5 703.5 L608.2 708.2 L608.7 707.0 L609.3 702.7 L609.9 705.2 L610.6 700.7 L611.3 704.3 L611.7 703.7 L612.2 707.6 L612.7 705.6 L613.4 699.0 L614.0 708.2 L614.7 704.9 L615.4 703.1 L616.0 702.6 L616.7 707.1 L617.4 704.3 L617.9 715.3 L618.5 697.1 L619.0 704.8 L619.8 709.6 L620.3 709.2 L620.8 700.0 L621.3 702.6 L622.0 705.0 L622.7 700.9 L623.3 702.1 L623.9 705.4 L624.5 705.8 L625.2 705.7 L625.8 703.6 L626.5 704.2 L627.1 701.2 L627.7 703.6 L628.3 703.7 L628.9 702.3 L629.6 704.2 L630.3 705.6 L630.9 704.8 L631.5 710.5 L632.1 703.0 L632.7 703.7 L633.2 705.2 L633.7 704.6 L634.4 703.5 L634.9 704.8 L635.6 696.8 L636.2 700.4 L636.7 704.8 L637.2 705.8 L637.8 701.1 L638.3 704.0 L638.8 701.3 L639.2 705.0 L639.9 705.2 L640.4 704.2 L640.9 706.2 L641.5 713.3 L642.2 700.7 L642.9 702.1 L643.6 703.9 L644.2 703.1 L644.8 704.5 L645.4 703.0 L645.9 699.8 L646.4 703.0 L646.9 704.4 L647.4 702.4 L648.1 704.8 L648.7 708.8 L649.4 707.7 L649.9 694.7 L650.5 705.3 L651.3 706.0 L651.9 703.8 L652.6 703.2 L653.2 705.5 L653.8 711.5 L654.4 704.2 L655.1 701.0 L655.6 704.4 L656.1 703.9 L656.8 705.9 L657.4 703.0 L658.0 703.9 L658.6 702.6 L659.3 705.5 L659.7 706.4 L660.2 708.3 L660.8 709.0 L661.3 706.6 L661.8 700.5 L662.3 705.2 L663.1 704.6 L663.5 699.9 L664.1 705.2 L664.7 702.7 L665.4 705.3 L665.9 710.5 L666.4 706.1 L666.9 715.5 L667.5 706.2 L668.1 705.4 L668.6 703.5 L669.2 706.5 L669.8 705.0 L670.4 704.3 L671.0 704.3 L671.6 704.2 L672.2 706.7 L672.8 704.3 L673.6 704.2 L674.2 704.8 L674.7 708.1 L675.3 706.3 L675.9 702.1 L676.6 706.5 L677.3 705.9 L678.0 708.9 L678.6 703.2 L679.2 705.3 L679.7 708.3 L680.3 700.8 L680.8 704.2 L681.6 701.8 L682.2 702.7 L682.7 704.8 L683.3 702.6 L684.0 705.3 L684.7 700.2 L685.2 704.5 L685.8 704.6 L686.5 705.4 L687.1 701.9 L687.6 704.1 L688.1 704.1 L688.8 705.7 L689.3 703.2 L689.8 705.4 L690.3 709.4 L690.9 703.0 L691.4 693.9 L692.0 697.9 L692.5 706.5 L693.2 712.7 L693.8 705.6 L694.4 703.2 L694.9 704.4 L695.4 706.6 L696.1 706.8 L696.9 705.1 L697.5 704.3 L698.2 699.9 L698.8 704.5 L699.2 705.7 L699.7 698.8 L700.2 710.6 L700.8 703.5 L701.5 702.6 L702.2 705.3 L702.9 703.6 L703.6 709.9 L704.2 703.9 L704.9 704.7 L705.6 702.7 L706.2 703.9 L706.7 702.4 L707.2 704.9 L707.7 704.5 L708.4 704.2 L709.0 705.3 L709.7 704.2 L710.4 715.8 L711.0 711.9 L711.7 706.7 L712.4 706.0 L712.9 693.6 L713.5 709.4 L714.2 706.7 L714.9 706.1 L715.4 698.5 L716.2 708.5 L716.7 704.4 L717.5 701.1 L718.1 705.1 L718.7 702.9 L719.2 703.0 L719.8 701.3 L720.3 702.6 L721.0 706.7 L721.6 704.3 L722.1 700.7 L722.7 694.4 L723.4 700.7 L723.9 705.0 L724.6 703.4 L725.2 701.3 L726.0 705.4 L726.4 696.8 L727.1 706.0 L727.8 705.8 L728.3 707.9 L728.9 704.7 L729.4 702.7 L730.2 706.1 L730.8 699.8 L731.5 706.0 L731.9 704.6 L732.6 708.8 L733.2 701.5 L733.9 707.1 L734.6 702.9 L735.3 702.6 L735.8 703.1 L736.4 702.1 L737.0 705.4 L737.5 703.4 L738.1 700.4 L738.7 704.5 L739.4 704.0 L740.0 704.4 L740.8 702.8 L741.3 708.9 L742.0 705.3 L742.7 705.5 L743.3 704.0 L744.0 708.5 L744.5 704.2 L745.0 702.8 L745.7 704.2 L746.3 705.3 L746.9 711.7 L747.6 705.6 L748.1 703.2 L748.5 703.0 L749.0 705.0 L749.5 707.4 L750.2 704.4 L750.9 705.0 L751.4 706.5 L752.1 705.2 L752.7 702.8 L753.2 703.1 L753.9 704.7 L754.5 705.1 L755.2 706.6 L755.8 697.8 L756.3 700.2 L757.0 703.3 L757.7 703.9 L758.2 703.2 L759.0 707.7 L759.5 703.4 L760.1 702.2 L760.8 705.6 L761.3 703.7 L761.9 708.1 L762.6 706.7 L763.3 710.2 L764.0 703.7 L764.7 701.8 L765.3 707.5 L765.9 710.0 L766.4 699.5 L767.0 703.1 L767.7 699.1 L768.3 702.7 L769.0 704.4 L769.6 703.3 L770.3 704.8 L770.9 706.9 L771.6 708.4 L772.3 705.8 L772.8 706.0 L773.4 704.9 L774.1 704.9 L774.8 710.6 L775.3 703.5 L775.9 702.5 L776.5 702.1 L777.2 701.8 L777.8 708.7 L778.3 704.2 L778.8 701.0 L779.4 704.7 L780.0 703.9 L780.6 705.2 L781.2 706.1 L781.8 703.3 L782.6 698.6 L783.1 702.9 L783.8 703.7 L784.3 702.5 L784.8 703.1 L785.4 706.3 L786.1 703.5 L786.7 698.3 L787.1 706.5 L787.7 707.3 L788.2 701.7 L788.8 705.5 L789.3 704.3 L789.9 706.5 L790.6 704.5 L791.3 706.3 L791.8 703.2 L792.6 704.8 L793.3 706.0 L793.8 703.2 L794.5 703.5 L795.0 705.4 L795.6 703.1 L796.2 704.4 L796.9 708.5 L797.6 701.7 L798.3 709.5 L798.9 712.1 L799.4 705.7 L800.1 705.7 L800.6 704.4 L801.2 703.5 L801.8 703.6 L802.3 712.3 L802.8 705.2 L803.6 706.9 L804.2 699.8 L804.8 707.3 L805.3 702.3 L805.8 704.9 L806.5 703.4 L807.2 698.1 L807.7 704.0 L808.4 709.1 L809.0 705.1 L809.7 709.5 L810.2 695.8 L810.7 707.4 L811.1 703.5 L811.8 711.8 L812.2 703.9 L812.7 707.7 L813.5 696.7 L814.2 704.4 L814.8 703.3 L815.5 707.7 L816.0 704.4 L816.6 705.4 L817.3 707.7 L817.8 704.1 L818.4 702.9 L819.1 702.9 L819.8 701.9 L820.4 705.5 L821.2 702.5 L821.7 703.5 L822.3 705.1 L822.8 705.5 L823.4 703.5 L824.1 705.7 L824.6 704.7 L825.2 707.7 L825.8 712.3 L826.3 699.9 L826.9 711.4 L827.4 705.7 L828.1 703.4 L828.6 705.7 L829.2 709.6 L829.8 703.8 L830.4 705.8 L831.0 699.0 L831.5 705.9 L832.0 708.1 L832.6 703.6 L833.0 705.9 L833.6 703.3 L834.2 713.3 L834.9 705.4 L835.6 704.1 L836.3 705.8 L836.9 706.1 L837.5 703.3 L838.1 702.9 L838.8 705.1 L839.5 696.4 L840.2 703.7 L840.8 703.5 L841.5 707.5 L842.1 700.7 L842.6 708.0 L843.3 705.2 L843.9 705.0 L844.6 711.1 L845.1 702.8 L845.6 706.8 L846.1 704.4 L846.6 705.5 L847.2 705.2 L847.6 705.3 L848.1 704.4 L848.6 703.6 L849.3 704.3 L849.8 703.8 L850.3 704.7 L850.9 701.6 L851.4 703.4 L852.0 702.9 L852.6 704.3 L853.4 712.0 L854.0 705.0 L854.6 704.0 L855.3 704.9 L856.0 707.1 L856.6 703.4 L857.1 703.8 L857.7 700.1 L858.3 714.0 L858.8 710.2 L859.6 703.3 L860.2 703.8 L861.0 708.5 L861.6 700.8 L862.3 705.9 L862.8 696.7 L863.4 700.4 L863.9 702.8 L864.4 702.9 L864.8 714.1 L865.3 702.9 L865.9 704.3 L866.5 705.8 L867.2 708.6 L867.8 704.7 L868.4 705.4 L869.1 702.7 L869.7 710.1 L870.3 693.6 L870.8 706.1 L871.5 706.2 L872.2 704.7 L872.8 702.2 L873.3 703.8 L873.9 706.0 L874.3 702.8 L875.0 703.9 L875.7 706.4 L876.2 700.3 L876.8 704.2 L877.3 705.4 L877.8 705.6 L878.4 705.8 L879.2 702.7 L879.7 706.1 L880.2 703.4 L881.0 707.8 L881.6 702.3 L882.1 702.6 L882.8 710.6 L883.3 703.9 L883.9 704.5 L884.6 701.9 L885.2 701.7 L885.9 701.8 L886.3 703.7 L887.0 703.5 L887.5 703.8 L888.2 705.2 L888.8 715.4 L889.3 702.6 L890.0 700.1 L890.6 704.9 L891.3 703.8 L891.8 707.8 L892.3 703.1 L892.9 703.7 L893.5 706.8 L894.2 700.4 L894.7 701.7 L895.4 704.8 L896.1 706.1 L896.6 709.2 L897.2 702.8 L897.9 706.8 L898.4 703.3 L898.9 704.6 L899.5 704.9 L900.1 706.8 L900.7 702.6 L901.2 705.8 L901.8 706.1 L902.4 697.4 L903.2 704.0 L903.9 705.2 L904.4 704.5 L905.0 701.4 L905.6 705.0 L906.3 700.3 L906.9 702.1 L907.5 706.6 L908.2 704.9 L908.9 702.8 L909.4 703.0 L910.1 705.8 L910.5 703.3 L911.1 710.2 L911.7 703.4 L912.2 705.0 L912.9 704.9 L913.5 704.0 L914.3 699.8 L914.9 705.6 L915.6 704.9 L916.2 707.1 L916.7 709.2 L917.5 705.0 L918.0 704.3 L918.7 702.3 L919.5 706.0 L920.0 706.5 L920.6 703.1 L921.1 702.9 L921.6 707.0 L922.2 702.4 L922.9 705.1 L923.4 703.1 L924.0 704.4 L924.5 709.6 L925.0 709.0 L925.6 703.5 L926.3 704.4 L926.9 704.4 L927.6 707.0 L928.2 701.5 L928.7 704.1 L929.4 705.8 L930.0 702.3 L930.5 705.5 L931.2 700.8 L931.7 714.9 L932.4 704.4 L933.1 703.6 L933.8 703.7 L934.5 703.2 L935.0 697.0 L935.7 705.2 L936.3 711.5 L937.0 702.3 L937.5 707.7 L938.1 695.1 L938.7 703.7 L939.3 705.7 L940.0 702.1 L940.5 704.4 L941.1 705.2 L941.7 703.5 L942.4 705.5" fill="none" stroke="#fff" stroke-width="2.5" stroke-linejoin="round"/>
</g>
<circle cx="147.5" cy="720.5" r="6.2" fill="none" stroke="#d41414" stroke-width="2.6"/>
<!-- tabs -->
<path d="M0.5 67.5 L23 44.6 Q24.5 43.2 27 43.2 L91 43.2 Q96.5 43.2 94.5 47 L83.5 65 Q82 67.5 79 67.5 Z" fill="#eceeee" stroke="#505050" stroke-width="1.1"/>
<path d="M209.8 67.6 L209.8 49 Q209.8 47 211 45.8 L213 44 Q214 43.2 216 43.2 L318 43.2 Q322.3 43.2 322.3 47.5 L322.3 67.6 Z" fill="#eceeef" stroke="#555" stroke-width="1.1"/>
<path d="M76 69.5 L101.5 44.2 Q103.8 42 107 42 L204.5 42 Q208.3 42 208.3 46 L208.3 65 Q208.3 67.5 211 67.8 L211 69.5 Z" fill="#fdfdfd" stroke="#505050" stroke-width="1.1"/>
<rect x="74" y="68.5" width="140" height="3" fill="#fdfdfd"/>
<!-- laser icon -->
<g stroke="#a80f1c" stroke-width="1.5" stroke-linecap="round">
<line x1="113.3" y1="46.8" x2="113.3" y2="62.6"/>
<line x1="107.6" y1="49" x2="119" y2="60.4"/>
<line x1="119" y1="49" x2="107.6" y2="60.4"/>
<line x1="106" y1="54.7" x2="123.5" y2="54.7"/>
</g>
<circle cx="113.3" cy="54.7" r="3.4" fill="#f01414"/>
<!-- 3D icon -->
<rect x="219.3" y="49" width="17" height="12" fill="#f4f6f8"/>
<rect x="220" y="50.2" width="6.4" height="6.6" fill="#f00a14"/>
<rect x="228.3" y="50.2" width="6.7" height="6.6" fill="#1428f0"/>
<rect x="219.4" y="59" width="16.4" height="1.6" fill="#4a5a56"/>
<!-- start icon -->
<g>
<path d="M26.3 46.5 Q26.3 44.3 28.5 44.3 L38 44.3 Q44 44.8 44 52 L44 63 Q44 64.6 42.4 64.6 L27.9 64.6 Q26.3 64.6 26.3 63 Z" fill="#3a8ad8" stroke="#2a4a7a" stroke-width="0.8"/>
<path d="M26.7 58 L43.6 58 L43.6 63 Q43.6 64.2 42.4 64.2 L27.9 64.2 Q26.7 64.2 26.7 63 Z" fill="#58a8e8"/>
<circle cx="34.4" cy="52.2" r="6.9" fill="#101c30"/>
<path d="M39 55 L43.6 60.5 L43.6 57 L41 53.5 Z" fill="#101c30"/>
<path d="M31 54 Q33 49.5 36.5 50 Q38 53 36.5 56.5 Q34 59 31.5 57.5 Z" fill="#8ec83a"/>
<path d="M33 52 Q35 50.5 36.5 51.5 L35.5 54 Z" fill="#e8e040"/>
<path d="M38 58 Q41 57.5 43.6 60 L43.6 62.5 Q40.5 62 38 58 Z" fill="#c8d8e8"/>
</g>
</svg>
<div class="tab" style="left:46px;top:44.5px;transform:scaleX(.885);">起始页</div>
<div class="tab" style="left:126px;top:44.5px;font-weight:bold;color:#000;">2D光束显示</div>
<div class="tab" style="left:238.6px;top:44.5px;">3D光束显示</div>
</body>
</html>
